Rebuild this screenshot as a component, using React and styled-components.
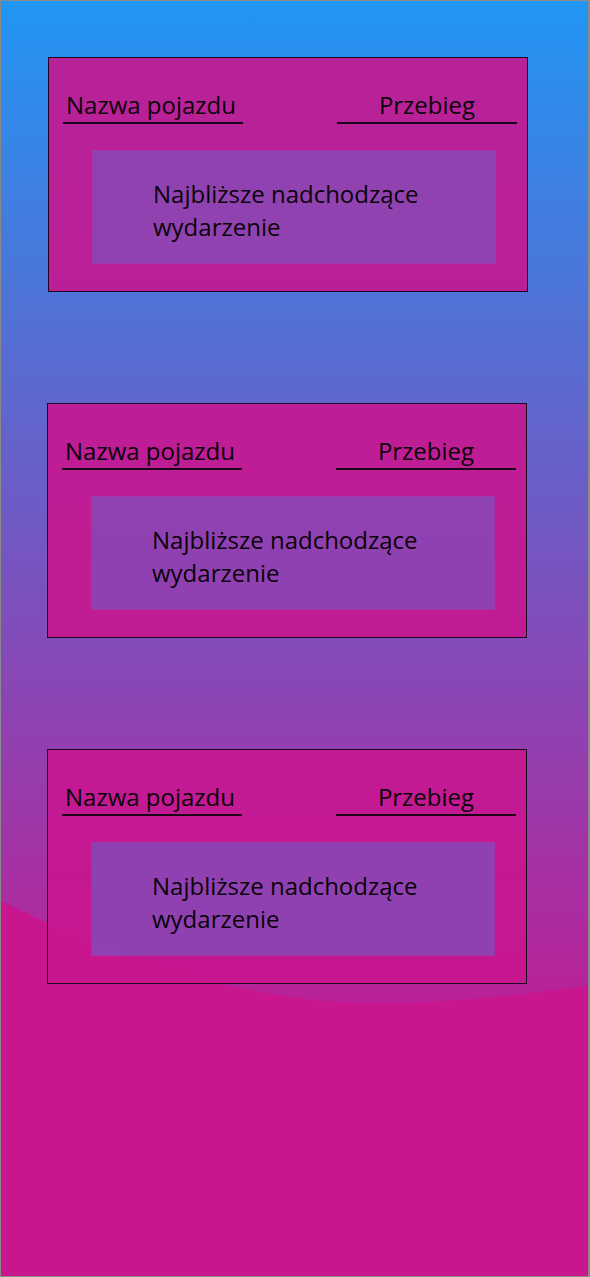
import React from 'react';
import styled, { createGlobalStyle } from 'styled-components';

const GlobalStyle = createGlobalStyle`
  html, body {
    margin: 0;
    padding: 0;
    background: #9a9a9a;
  }
  * {
    box-sizing: border-box;
  }
`;

const Screen = styled.div`
  position: relative;
  width: 590px;
  height: 1277px;
  border: 1px solid #8a8a8a;
  border-right-width: 2px;
  overflow: hidden;
  background: linear-gradient(180deg, #2196f3 0%, #c8168f 86%);
  font-family: "Open Sans", "Noto Sans", sans-serif;
`;

const Wave = styled.svg`
  position: absolute;
  left: 0;
  top: 880px;
  width: 590px;
  height: 400px;
`;

const List = styled.div`
  position: relative;
  display: flex;
  flex-direction: column;
  gap: 111px;
  padding: 56px 0 0 46px;
`;

const Card = styled.section`
  width: 480px;
  height: 235px;
  border: 1px solid #1e0622;
  background: rgba(200, 22, 143, 0.9);
  padding: 0 10px 0 14px;
  display: flex;
  flex-direction: column;
  margin-left: ${(p) => p.$shift || 0}px;
`;

const Header = styled.div`
  display: flex;
  justify-content: space-between;
  padding-top: 30px;
`;

const Field = styled.div`
  width: 180px;
  height: 36px;
  border-bottom: 2px solid #1a0418;
  font-size: 24px;
  line-height: 34px;
  color: #0a0208;
  text-align: ${(p) => (p.$center ? 'center' : 'left')};
  padding-left: ${(p) => (p.$center ? 0 : 3)}px;
  white-space: nowrap;
`;

const EventBox = styled.div`
  margin: 26px 0 0 29px;
  width: 404px;
  height: 114px;
  background: rgba(142, 67, 178, 0.97);
  border: 1px solid rgba(170, 50, 170, 0.6);
  padding: 26px 30px 0 60px;
  font-size: 24px;
  line-height: 33px;
  color: #0a0208;
`;

const vehicles = [
  { id: 1, shift: 1 },
  { id: 2, shift: 0 },
  { id: 3, shift: 0 },
];

const App = () => (
  <>
    <GlobalStyle />
    <Screen>
      <Wave viewBox="0 0 590 400" preserveAspectRatio="none">
        <path
          d="M0 20 C 120 80, 240 118, 360 122 C 450 124, 530 112, 590 104 L590 400 L0 400 Z"
          fill="#c8168f"
        />
      </Wave>
      <List>
        {vehicles.map((v) => (
          <Card key={v.id} $shift={v.shift}>
            <Header>
              <Field>Nazwa pojazdu</Field>
              <Field $center>Przebieg</Field>
            </Header>
            <EventBox>Najbliższe nadchodzące wydarzenie</EventBox>
          </Card>
        ))}
      </List>
    </Screen>
  </>
);

export default App;
